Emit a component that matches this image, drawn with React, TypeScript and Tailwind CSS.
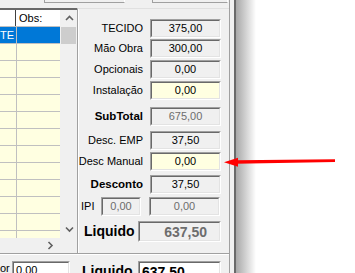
import React from 'react';

type FieldProps = {
    value: string;
    width: number;
    height?: number;
    bg?: string;
    muted?: boolean;
    big?: boolean;
    align?: 'center' | 'right' | 'left';
};

function Field({ value, width, height = 19, bg = 'bg-[#f0f0f0]', muted, big, align = 'center' }: FieldProps) {
    const alignClass = align === 'center' ? 'justify-center' : align === 'right' ? 'justify-end pr-[12px]' : 'justify-start pl-[2px]';
    return (
        <div
            className="border border-t-[#a0a0a0] border-l-[#a0a0a0] border-r-white border-b-white box-border shrink-0"
            style={{ width, height }}
        >
            <div className={`h-full w-full border border-t-[#696969] border-l-[#696969] border-r-[#e3e3e3] border-b-[#e3e3e3] flex items-center ${alignClass} ${bg}`}>
                <span
                    className={`${big ? 'text-[14px] font-bold' : 'text-[11px]'} ${muted ? 'text-[#6d6d6d]' : 'text-black'} leading-none`}
                >
                    {value}
                </span>
            </div>
        </div>
    );
}

function Row({ label, value, mt, bold, yellow, muted }: { label: string; value: string; mt: number; bold?: boolean; yellow?: boolean; muted?: boolean }) {
    return (
        <div className="flex items-center h-[19px]" style={{ marginTop: mt }}>
            <div className={`w-[65px] text-right whitespace-nowrap ${bold ? 'font-bold text-[11.5px]' : 'text-[11px]'} text-black`}>{label}</div>
            <div className="ml-[7px]">
                <Field value={value} width={71} bg={yellow ? 'bg-[#ffffe1]' : 'bg-[#f0f0f0]'} muted={muted} />
            </div>
        </div>
    );
}

function Chevron({ dir }: { dir: 'up' | 'down' | 'right' }) {
    const d = dir === 'up' ? 'M1 5 L4.5 1.5 L8 5' : dir === 'down' ? 'M1 1.5 L4.5 5 L8 1.5' : 'M1.5 1 L5 4.5 L1.5 8';
    const size = dir === 'right' ? { w: 7, h: 9 } : { w: 9, h: 7 };
    return (
        <svg width={size.w} height={size.h} viewBox={`0 0 ${size.w} ${size.h}`}>
            <path d={d} fill="none" stroke="#606060" strokeWidth="1.6" />
        </svg>
    );
}

export default function App() {
    const rows = Array.from({ length: 13 });
    return (
        <div className="relative w-[355px] h-[273px] bg-white overflow-hidden flex" style={{ fontFamily: '"Liberation Sans", Arial, sans-serif' }}>
            {/* window */}
            <div className="w-[229px] h-full bg-[#f0f0f0] flex flex-col">
                {/* top strip: bottoms of inputs above */}
                <div className="h-[8px] flex shrink-0">
                    <div className="ml-[44px] w-[81px] h-[3px] border-l border-b border-r border-l-[#a0a0a0] border-b-[#a0a0a0] border-r-white" />
                    <div className="ml-[27px] w-[76px] h-[3px] border-l border-b border-r border-l-[#a0a0a0] border-b-[#a0a0a0] border-r-white" />
                </div>

                <div className="flex h-[245px] shrink-0">
                    {/* grid */}
                    <div className="w-[77px] flex flex-col">
                        <div className="flex h-[230px] border-t-2 border-t-[#696969]">
                            <div className="w-[60px] flex flex-col">
                                <div className="flex h-[17px] bg-white border-b border-b-[#c0c0c0] shrink-0">
                                    <div className="w-[16px] border-r border-r-[#404040]" />
                                    <div className="pl-[3px] text-[11px] leading-[16px] text-black">Obs:</div>
                                </div>
                                <div className="bg-[#ffffe1] flex-1 overflow-hidden">
                                    {rows.map((_, i) => (
                                        <div key={i} className="flex h-[17px] border-b border-b-[#c0c0c0]">
                                            <div
                                                className={`w-[17px] border-r border-r-[#c0c0c0] text-[11px] leading-[16px] ${i === 0 ? 'bg-[#0078d7] text-white' : ''}`}
                                            >
                                                {i === 0 ? 'TE' : ''}
                                            </div>
                                            <div className={`flex-1 ${i === 0 ? 'bg-[#0078d7]' : ''}`} />
                                        </div>
                                    ))}
                                </div>
                            </div>
                            {/* vertical scrollbar */}
                            <div className="w-[17px] bg-[#f0f0f0] flex flex-col">
                                <div className="h-[17px] flex items-center justify-center pl-[1px]">
                                    <Chevron dir="up" />
                                </div>
                                <div className="h-[17px] bg-[#cdcdcd] mx-[1px]" />
                                <div className="flex-1" />
                                <div className="h-[17px] flex items-center justify-center pl-[1px]">
                                    <Chevron dir="down" />
                                </div>
                            </div>
                        </div>
                        {/* horizontal scrollbar */}
                        <div className="flex h-[15px]">
                            <div className="w-[60px] flex items-center justify-end pr-[6px]">
                                <Chevron dir="right" />
                            </div>
                            <div className="w-[17px]" />
                        </div>
                    </div>

                    {/* totals panel */}
                    <div className="w-[152px] border-l border-t border-l-[#a0a0a0] border-t-[#e0e0e0] shadow-[inset_1px_0_0_#ffffff] flex flex-col">
                        <Row label="TECIDO" value="375,00" mt={10} />
                        <Row label="Mão Obra" value="300,00" mt={1} />
                        <Row label="Opcionais" value="0,00" mt={2} />
                        <Row label="Instalação" value="0,00" mt={2} yellow />
                        <Row label="SubTotal" value="675,00" mt={7} bold muted />
                        <Row label="Desc. EMP" value="37,50" mt={5} />
                        <Row label="Desc Manual" value="0,00" mt={2} yellow />
                        <Row label="Desconto" value="37,50" mt={4} bold />
                        <div className="flex items-center h-[19px] mt-[3px]">
                            <div className="w-[23px] pl-[3px] text-[11px] text-black">IPI</div>
                            <Field value="0,00" width={40} muted />
                            <div className="ml-[8px]">
                                <Field value="0,00" width={71} muted />
                            </div>
                        </div>
                        <div className="flex items-center h-[21px] mt-[5px]">
                            <div className="w-[60px] pl-[6px] text-[14px] font-bold text-black">Liquido</div>
                            <Field value="637,50" width={83} height={21} muted big align="right" />
                        </div>
                    </div>
                </div>

                {/* separator */}
                <div className="h-[2px] border-t border-t-[#a0a0a0] border-b border-b-white shrink-0" />

                {/* bottom row */}
                <div className="flex items-start pt-[6px] h-[18px] shrink-0">
                    <div className="w-[12px] text-[11px] leading-[14px] text-black overflow-hidden">or</div>
                    <Field value="0,00" width={58} height={19} bg="bg-white" align="left" />
                    <div className="ml-[12px] w-[56px] text-[14px] font-bold leading-[16px] pt-[2px] text-black">Liquido</div>
                    <Field value="637,50" width={83} height={21} bg="bg-white" big align="left" />
                </div>
            </div>

            {/* window edge and drop shadow */}
            <div className="w-[1px] h-full bg-[#a0a0a0]" />
            <div className="w-[4px] h-full bg-[#f0f0f0]" />
            <div className="w-[2px] h-full bg-[#696969]" />
            <div className="w-[20px] h-full bg-gradient-to-r from-[#a8a8a8] to-white" />

            {/* red pointer arrow */}
            <svg className="absolute left-[220px] top-[150px]" width="120" height="24" viewBox="0 0 120 24">
                <path d="M16 10.2 L115 9.2 L115 12 L16 13.8 Z" fill="#ff0000" />
                <path d="M4 12.3 L18 7.8 L18 16.8 Z" fill="#ff0000" />
            </svg>
        </div>
    );
}
